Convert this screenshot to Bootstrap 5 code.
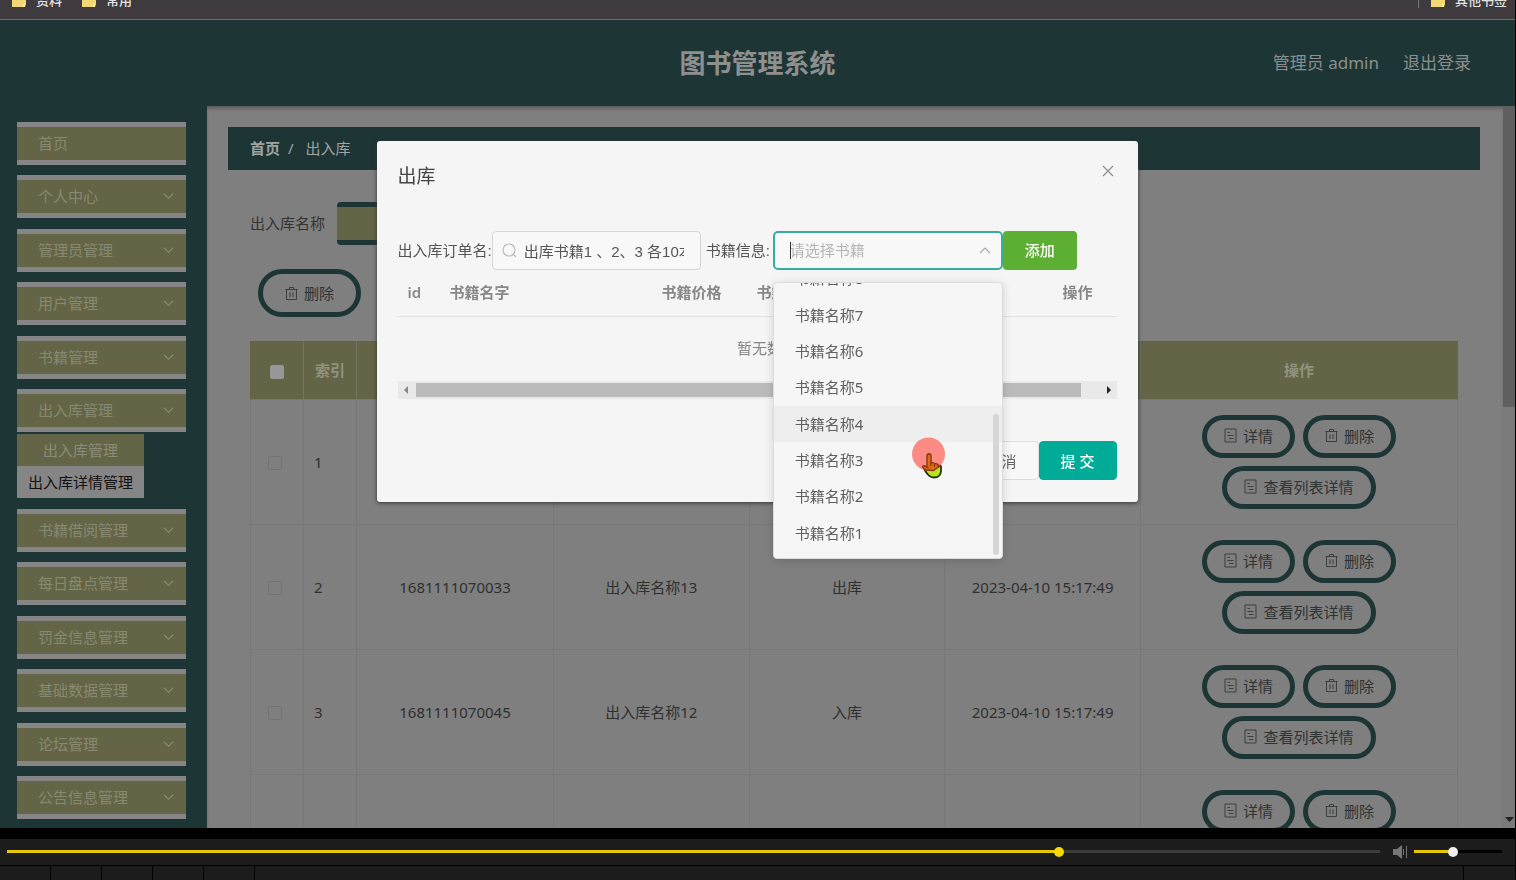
<!DOCTYPE html>
<html lang="zh-CN">
<head>
<meta charset="utf-8">
<meta name="viewport" content="width=device-width, initial-scale=1">
<title>图书管理系统</title>
<link href="https://cdn.jsdelivr.net/npm/bootstrap@5.3.0/dist/css/bootstrap.min.css" rel="stylesheet">
<style>
:root{--teal:#1d3535;--olive:#646547;--pale:#858585;--page:#7f7f7f}
body{font:15px/20px "Noto Sans","Noto Sans CJK SC",sans-serif;background:#000;color:#333}
a{text-decoration:none;color:inherit}
.shell{height:100vh;border-right:1px solid #000}
/* browser bookmarks strip */
.bookmarks{height:20px;background:#3e3a3d;border-bottom:1px solid #6b6f6f;color:#e4e4e4;font-size:13px;line-height:16px}
.bookmarks a{height:16px;margin-top:-8px;gap:10px;font-weight:500}
.bookmarks .rule-v{width:1px;height:8px;background:#777}
.topbar{height:86px;background:var(--teal);color:#8b8f8d}
.topbar h1{font-size:26px;line-height:32px;color:#8e908f}
.topbar .account{right:44px;font-size:17px}
/* side menu */
.side{width:207px;background:var(--teal);padding:16px 21px 9px 17px}
.side-item{height:43px;width:100%;background:var(--olive);border:solid var(--pale);border-width:5px 0;color:#888971;padding:0 12px 1px 21px;text-align:left}
.side-sub{width:127px;margin-top:2px;background:var(--olive);color:#8b8c78}
.side-sub a{height:32px;line-height:32px}
.side-sub a+a{background:var(--pale);color:#111}
/* content */
.content{background:var(--page);padding:21px 23px 0 21px;box-shadow:inset 0 4px 4px -2px #555}
.crumbs{height:43px;background:var(--teal);padding:0 22px 2px;color:#a0a4a2}
.work{padding:32px 22px 0}
.work label{padding-bottom:2px}
.search-box{height:43px;width:190px;margin-left:12px;border:solid var(--teal);border-width:5px 0;border-radius:4px;background:var(--olive)}
.pill{height:43px;border:5px solid var(--teal);border-radius:24px;background:transparent;color:#2d3333;padding:0 17px 1px;display:inline-flex;align-items:center;gap:6px;white-space:nowrap}
.pill-lg{height:48px;padding:0 22px;margin:24px 8px}
.grid-table{table-layout:fixed;width:100%;border-collapse:collapse;color:#303030}
.grid-table th{height:58px;background:var(--olive);color:#92937f;border:solid #747562;border-width:0 1px;text-align:center}
.grid-table th:first-child{border-left-color:var(--olive)}
.grid-table th:last-child{border-right-color:var(--olive)}
.grid-table td{height:125px;border:1px solid #777;text-align:center;padding:0}
.grid-table .ops{width:317px}
.grid-table .serial{width:197px}
.grid-table .tiny{width:53px}
.grid-table td.num{text-align:left;padding-left:10px}
.tick{appearance:none;width:14px;height:14px;border:1px solid #747474;border-radius:2px;background:transparent;margin:0 4px 0 0;display:inline-block;vertical-align:middle}
th .tick{background:#989898;border-color:#989898;margin:0}
.op-cell{gap:8px;padding:0 60px}
.page-scroll{width:12px;background:#7b7a7a}
.page-scroll .thumb{height:301px;background:#5f5f5f}
.page-scroll svg{margin:0 0 5px 2px}
/* player */
.player{margin-top:11px;height:27px;background:#1c1c1c;padding:0 13px 1px 7px;border-bottom:1px solid #000}
.track{appearance:none;height:12px;margin:0;background:linear-gradient(90deg,#e6c700 var(--p),var(--rest) 0) center/100% 3px no-repeat}
.track::-webkit-slider-thumb{appearance:none;width:10px;height:10px;border-radius:50%;background:var(--knob)}
.track-time{--rest:#3c3c3c;--knob:#f7d900}
.track-vol{--rest:#000;--knob:#eee;width:88px}
.speaker{margin:0 5px 0 13px}
.tools{height:14px;background:#1c1c1c}
.tools span{width:51px;border-right:1px solid #000}
.tools span:last-child{border:0}
/* dialog */
.modal{padding-right:2px}
.modal-dialog{max-width:761px;margin:141px auto 0}
.modal-content{border:0;border-radius:3px;background:#f5f5f5;height:361px;padding:22px 21px;color:#555;box-shadow:0 1px 4px #333}
.modal-content h2{font-size:19px;line-height:26px;color:#444;font-weight:400}
.close-x{border:0;background:none;padding:0;width:18px;height:16px;line-height:0}
.form-line{margin-top:42px;height:39px;font-family:"Liberation Sans","Noto Sans CJK SC",sans-serif}
.name-box{width:209px;margin-right:5px}
.name-box input{height:39px;width:100%;border:1px solid #d6d6d6;border-radius:4px;background:#f8f8f8;padding:0 16px 1px 31px;color:#555}
.name-box svg{left:10px;top:12px}
.book-box{width:230px;margin-left:3px}
.book-box select{appearance:none;height:39px;width:100%;border:2px solid #35aea0;border-radius:5px;background:#f8f8f8;padding:0 15px;color:#b4b4b4}
.book-box .caret{left:17px;top:11px;width:1px;height:17px;background:#333}
.book-box .arrow{right:11px;top:14px}
.btn-plus{height:39px;width:74px;border:0;border-radius:4px;background:#5daf34;color:#fff;font-weight:500}
.menu{left:0;right:0;top:51px;height:277px;background:#f6f6f6;border:1px solid #dcdcdc;border-radius:4px;box-shadow:0 2px 10px rgba(0,0,0,.15);padding-bottom:7px;z-index:5;font-family:"Noto Sans","Noto Sans CJK SC",sans-serif}
.menu-clip{height:100%;overflow:hidden}
.menu ul{height:291px;flex:none}
.menu li{padding-left:21px;color:#606060}
.menu li.hot{background:#eeeeef}
.menu .bar{right:3px;top:131px;bottom:3px;width:6px;border-radius:3px;background:#d6d6d6}
.menu .pointer{left:136px;top:152px}
.order-table{table-layout:fixed;width:100%;color:#888}
.order-table th{height:46px;padding:0 10px 2px;border-bottom:1px solid #e2e2e2;white-space:nowrap;overflow:hidden;font-weight:600}
.order-table td{height:65px;text-align:center;padding:0 0 2px 20px}
.hscroll{height:18px;background:#e9e9e9;padding:0 5px}
.hscroll i{height:14px;background:#bbb;margin:0 25px 0 7px}
.foot-btn{height:39px;width:78px;border:1px solid #dcdcdc;border-radius:4px;background:#f8f8f8;color:#666}
.foot-btn.go{background:#00ac97;border-color:#00ac97;color:#fff;font-weight:500}
</style>
</head>
<body>
<svg width="0" height="0" class="position-absolute" aria-hidden="true">
  <symbol id="folder" viewBox="0 0 14 16"><path d="M0 1h6l2 2h6v9l-1 3H0z" fill="#f3d775"/><path d="M11 15v-2l2-2v4z" fill="#fff0a8"/></symbol>
  <symbol id="down" viewBox="0 0 12 8"><path d="M1 1.5 6 6.5 11 1.5" fill="none" stroke="#90917b" stroke-width="1.1"/></symbol>
  <symbol id="bin" viewBox="0 0 13 15"><path d="M.5 3.5h12M4.500 3.500v-2h4v2M1.500 3.500v10h10v-10M5 6.500v4.500M8 6.500v4.500" fill="none" stroke="#3c3f3f"/></symbol>
  <symbol id="doc" viewBox="0 0 13 15"><path d="M1 1h11v13H1zM3.500 4.500h2.500M3.500 7.500h6M5 10.500h4.500" fill="none" stroke="#3c3f3f"/></symbol>
</svg>
<div class="shell d-flex flex-column overflow-hidden">
  <nav class="bookmarks d-flex align-items-start flex-shrink-0 overflow-hidden px-2" aria-label="书签">
    <a href="#" class="d-flex ms-1 me-3"><svg width="14" height="16"><use href="#folder"/></svg>资料</a>
    <a href="#" class="d-flex ms-1"><svg width="14" height="16"><use href="#folder"/></svg>常用</a>
    <span class="rule-v ms-auto me-2"></span>
    <a href="#" class="d-flex ms-1"><svg width="14" height="16"><use href="#folder"/></svg>其他书签</a>
  </nav>
  <header class="topbar d-flex align-items-center justify-content-center position-relative flex-shrink-0">
    <h1 class="m-0 fw-bold">图书管理系统</h1>
    <div class="account position-absolute d-flex gap-4"><span>管理员 admin</span><a href="#">退出登录</a></div>
  </header>
  <div class="d-flex flex-fill overflow-hidden">
    <nav class="side d-flex flex-column justify-content-between flex-shrink-0" id="side" aria-label="菜单"></nav>
    <main class="content flex-fill overflow-hidden">
      <div class="crumbs d-flex align-items-center gap-2"><a href="#" class="fw-bold">首页</a><span>/</span><span class="ms-1">出入库</span></div>
      <div class="work">
        <div class="d-flex align-items-center"><label for="q">出入库名称</label><input id="q" class="search-box" type="text"></div>
        <button class="pill pill-lg" type="button"><svg width="13" height="15"><use href="#bin"/></svg>删除</button>
        <table class="grid-table">
          <thead><tr><th class="tiny"><input class="tick" type="checkbox" aria-label="全选"></th><th class="tiny">索引</th><th class="serial"></th><th></th><th></th><th></th><th class="ops">操作</th></tr></thead>
          <tbody id="rows"></tbody>
        </table>
      </div>
    </main>
    <div class="page-scroll d-flex flex-column justify-content-between flex-shrink-0"><div class="thumb"></div><svg width="9" height="6"><path d="M0 0h9L4.500 5z" fill="#222"/></svg></div>
  </div>
  <div class="player d-flex align-items-center flex-shrink-0">
    <input class="track track-time flex-fill" type="range" step="any" value="76.85" style="--p:76.6%" aria-label="进度">
    <svg class="speaker" width="16" height="14"><path d="M0 4h4l5-4v14l-5-4H0z" fill="#777"/><path d="M10.500 4v6M13.500 1v12" stroke="#777" fill="none"/></svg>
    <input class="track track-vol" type="range" step="any" value="44" style="--p:44%" aria-label="音量">
  </div>
  <div class="tools d-flex flex-shrink-0"><span></span><span></span><span></span><span></span><span></span><span class="flex-fill"></span><span></span></div>
</div>

<div class="modal d-block overflow-hidden" role="dialog" aria-labelledby="dlg">
  <div class="modal-dialog"><div class="modal-content">
    <div class="d-flex justify-content-between"><h2 class="m-0" id="dlg">出库</h2>
      <button class="close-x" type="button" aria-label="关闭"><svg width="12" height="12"><path d="M1 1l10 10M11 1 1 11" stroke="#8c8c8c" stroke-width="1.200"/></svg></button></div>
    <div class="form-line d-flex align-items-center text-nowrap">
      <label for="order">出入库订单名:</label>
      <div class="name-box position-relative"><input id="order" type="text" value="出库书籍1 、2、3 各10本"><svg class="position-absolute" width="15" height="15"><circle cx="7" cy="7" r="6" fill="none" stroke="#bbb" stroke-width="1.200"/><path d="m11 11 3 3" stroke="#bbb" stroke-width="1.200"/></svg></div>
      <label for="book">书籍信息:</label>
      <div class="book-box position-relative">
        <select id="book"><option>请选择书籍</option></select>
        <span class="caret position-absolute"></span>
        <svg class="arrow position-absolute" width="14" height="10"><path d="m2 8 5-5 5 5" fill="none" stroke="#aaa" stroke-width="1.200"/></svg>
        <div class="menu position-absolute">
          <div class="menu-clip d-flex flex-column justify-content-end">
            <ul class="list-unstyled m-0 d-flex flex-column" role="listbox" aria-label="书籍" id="books"></ul>
          </div>
          <span class="bar position-absolute"></span>
          <svg class="pointer position-absolute" width="38" height="46" viewBox="0 0 38 46">
            <path d="M17 22c0-3 4-3 4 0v6c2-1 3 0 3.500 1 1.500-1 3 0 3.500 1 2-1 3 1 3 2v4c0 4-3 6.500-7 6.500-5 0-7-4-10-8.500-1-3 2-4 4-1z" fill="#b7e51c" stroke="#26330a" stroke-width="1.800"/>
            <circle cx="18.500" cy="19" r="16.500" fill="#fd7d73" fill-opacity=".88"/>
            <path d="M17 32.500V21c0-3 4-3 4 0v7c2-1 3 0 3.500 1 1.500-1 3 0 3.500 1l1.500 1.500-6 4-8-.5-3-3c0-2 2-2 5 .5z" fill="#db6b16" stroke="#8d3416" stroke-width="1.300"/>
            <path d="M21 27v4M24.500 29v3M28 30v2" stroke="#8d3416" stroke-width="1.200"/>
          </svg>
        </div>
      </div>
      <button class="btn-plus" type="button">添加</button>
    </div>
    <table class="order-table">
      <colgroup><col style="width:42px"><col style="width:212px"><col style="width:95px"><col><col style="width:64px"></colgroup>
      <thead><tr><th>id</th><th>书籍名字</th><th>书籍价格</th><th>书籍库存</th><th>操作</th></tr></thead>
      <tbody><tr><td colspan="5">暂无数据</td></tr></tbody>
    </table>
    <div class="hscroll d-flex align-items-center"><svg width="6" height="8"><path d="M5 0v8L1 4z" fill="#888"/></svg><i class="flex-fill"></i><svg width="6" height="8"><path d="M1 0v8l4-4z" fill="#222"/></svg></div>
    <div class="d-flex justify-content-end mt-auto"><button class="foot-btn" type="button">取 消</button><button class="foot-btn go" type="button">提 交</button></div>
  </div></div>
</div>
<script>
const menu=['首页','个人中心','管理员管理','用户管理','书籍管理','出入库管理','书籍借阅管理','每日盘点管理','罚金信息管理','基础数据管理','论坛管理','公告信息管理'];
document.getElementById('side').innerHTML=menu.map((t,i)=>`<div><button type="button" class="side-item d-flex align-items-center justify-content-between">${t}${i?'<svg width="11" height="8"><use href="#down"/></svg>':''}</button>${i===5?'<div class="side-sub text-center"><a href="#" class="d-block">出入库管理</a><a href="#" class="d-block">出入库详情管理</a></div>':''}</div>`).join('');
const pill=(icon,t)=>`<button type="button" class="pill"><svg width="13" height="15"><use href="#${icon}"/></svg>${t}</button>`;
const rows=[['1','','','',''],['2','1681111070033','出入库名称13','出库','2023-04-10 15:17:49'],['3','1681111070045','出入库名称12','入库','2023-04-10 15:17:49'],['','','','','']];
document.getElementById('rows').innerHTML=rows.map(r=>`<tr><td><input class="tick" type="checkbox" aria-label="选择"></td><td class="num">${r[0]}</td>${r.slice(1).map(c=>`<td>${c}</td>`).join('')}<td><div class="op-cell d-flex flex-wrap justify-content-center">${pill('doc','详情')}${pill('bin','删除')}${pill('doc','查看列表详情')}</div></td></tr>`).join('');
document.getElementById('books').innerHTML=[8,7,6,5,4,3,2,1].map(n=>`<li role="option" class="flex-fill d-flex align-items-center${n===4?' hot':''}">书籍名称${n}</li>`).join('');
</script>
<script src="https://cdn.jsdelivr.net/npm/bootstrap@5.3.0/dist/js/bootstrap.bundle.min.js"></script>
</body>
</html>
